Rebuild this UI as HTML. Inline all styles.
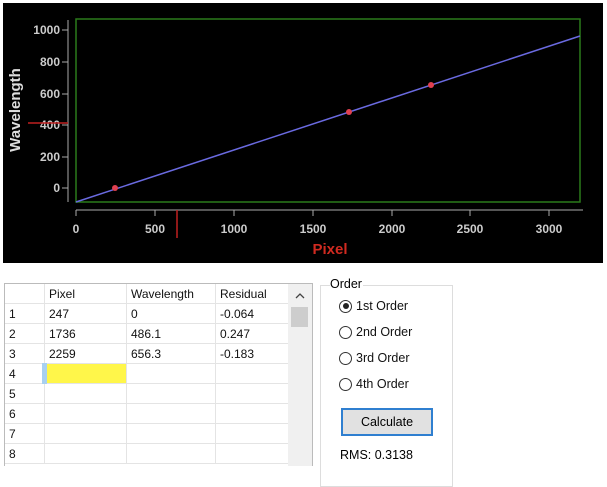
<!DOCTYPE html><html><head><style>
body{margin:0;width:607px;height:465px;background:#fff;position:relative;overflow:hidden;font-family:"Liberation Sans",sans-serif}
.a{position:absolute}
table{border-collapse:collapse;font-size:12px;color:#111}
td{height:19px;border-right:1px solid #e4e4e4;border-bottom:1px solid #e4e4e4;padding:0 0 0 4px}
.r{display:flex;align-items:center;font-size:12.5px;color:#111}
.c{width:13px;height:13px;border:1px solid #333;border-radius:50%;margin-right:4px;box-sizing:border-box;position:relative;background:#fff}
</style></head><body>
<div class="a" style="left:3px;top:3px;width:600px;height:260px;background:#000"></div>
<svg class="a" style="left:0;top:0" width="607" height="265" font-family="Liberation Sans" font-weight="bold" font-size="12">
<rect x="76" y="19" width="504" height="183" fill="none" stroke="#2a7a1a" stroke-width="1.5"/>
<line x1="68" y1="20" x2="68" y2="202" stroke="#aaa"/>
<g stroke="#aaa"><line x1="62" y1="30" x2="68" y2="30"/><line x1="62" y1="62" x2="68" y2="62"/><line x1="62" y1="94" x2="68" y2="94"/><line x1="62" y1="125" x2="68" y2="125"/><line x1="62" y1="157" x2="68" y2="157"/><line x1="62" y1="188" x2="68" y2="188"/></g>
<g fill="#ccc" text-anchor="end"><text x="60" y="34">1000</text><text x="60" y="66">800</text><text x="60" y="98">600</text><text x="60" y="129">400</text><text x="60" y="161">200</text><text x="60" y="192">0</text></g>
<line x1="28" y1="123" x2="68" y2="123" stroke="#c02020" stroke-width="1.5"/>
<line x1="76" y1="210" x2="583" y2="210" stroke="#aaa"/>
<g stroke="#aaa"><line x1="76" y1="210" x2="76" y2="216"/><line x1="155" y1="210" x2="155" y2="216"/><line x1="234" y1="210" x2="234" y2="216"/><line x1="313" y1="210" x2="313" y2="216"/><line x1="392" y1="210" x2="392" y2="216"/><line x1="470" y1="210" x2="470" y2="216"/><line x1="549" y1="210" x2="549" y2="216"/></g>
<g fill="#ccc" text-anchor="middle"><text x="76" y="233">0</text><text x="155" y="233">500</text><text x="234" y="233">1000</text><text x="313" y="233">1500</text><text x="392" y="233">2000</text><text x="470" y="233">2500</text><text x="549" y="233">3000</text></g>
<line x1="177" y1="210" x2="177" y2="238" stroke="#c02020" stroke-width="1.5"/>
<text x="330" y="254" fill="#d02a20" font-size="15" text-anchor="middle">Pixel</text>
<text transform="translate(20,110) rotate(-90)" fill="#ddd" font-size="15" text-anchor="middle">Wavelength</text>
<line x1="76" y1="202" x2="580" y2="36" stroke="#6a6ae0" stroke-width="1.5"/>
<g fill="#e04050"><circle cx="115" cy="188" r="3"/><circle cx="349" cy="112" r="3"/><circle cx="431" cy="85" r="3"/></g>
</svg>
<div class="a" style="left:4px;top:283px;width:307px;height:182px;border:1px solid #bbb;border-bottom:none;overflow:hidden">
<table>
<tr><td style="width:35px"></td><td style="width:77px">Pixel</td><td style="width:84px">Wavelength</td><td style="width:68px;border-right:none">Residual</td></tr>
<tr><td>1</td><td>247</td><td>0</td><td>-0.064</td></tr>
<tr><td>2</td><td>1736</td><td>486.1</td><td>0.247</td></tr>
<tr><td>3</td><td>2259</td><td>656.3</td><td>-0.183</td></tr>
<tr><td>4</td><td style="background:#fff64a;border-left:5px solid #a8d0f0;padding:0"></td><td></td><td></td></tr>
<tr><td>5</td><td></td><td></td><td></td></tr>
<tr><td>6</td><td></td><td></td><td></td></tr>
<tr><td>7</td><td></td><td></td><td></td></tr>
<tr><td>8</td><td></td><td></td><td></td></tr>
</table>
<div class="a" style="left:283px;top:0;width:24px;height:182px;background:#f0f0f0"></div>
<svg class="a" style="left:289px;top:8px" width="12" height="8"><path d="M2 6 L6 2 L10 6" fill="none" stroke="#444" stroke-width="1.3"/></svg>
<div class="a" style="left:286px;top:23px;width:17px;height:20px;background:#cdcdcd"></div>
</div>
<div class="a" style="left:320px;top:285px;width:131px;height:200px;border:1px solid #ddd"></div>
<div class="a" style="left:330px;top:277px;background:#fff;font-size:12.5px;padding-right:1px">Order</div>
<div class="a r" style="left:339px;top:299px"><div class="c"><div class="a" style="left:2.5px;top:2.5px;width:6px;height:6px;border-radius:50%;background:#222"></div></div>1st Order</div>
<div class="a r" style="left:339px;top:325px"><div class="c"></div>2nd Order</div>
<div class="a r" style="left:339px;top:351px"><div class="c"></div>3rd Order</div>
<div class="a r" style="left:339px;top:377px"><div class="c"></div>4th Order</div>
<div class="a" style="left:341px;top:408px;width:88px;height:24px;border:2px solid #2f7fd0;background:#e1e1e1;box-sizing:content-box;font-size:12.5px;text-align:center;line-height:24px">Calculate</div>
<div class="a" style="left:340px;top:448px;font-size:12.5px">RMS: 0.3138</div>
</body></html>
